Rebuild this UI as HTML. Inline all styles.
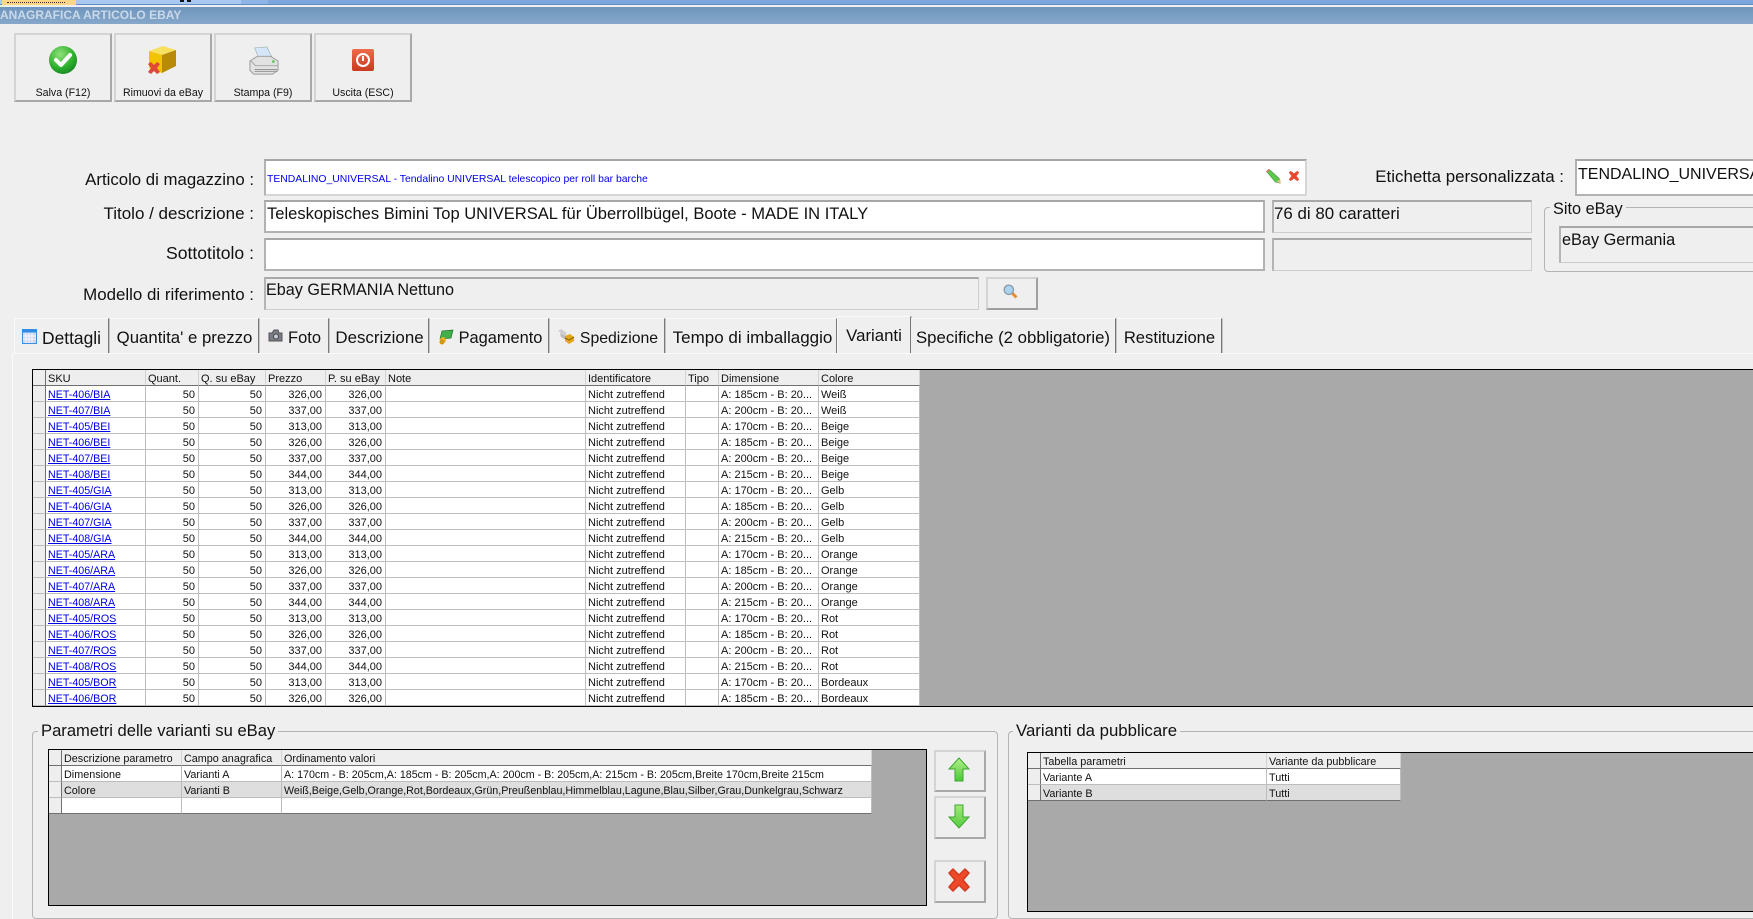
<!DOCTYPE html>
<html><head><meta charset="utf-8"><title>Anagrafica articolo eBay</title>
<style>
html,body{margin:0;padding:0;width:1753px;height:919px;overflow:hidden;background:#efefef;font-family:"Liberation Sans",sans-serif;color:#111}
.a{position:absolute;white-space:nowrap}
.btn{position:absolute;box-sizing:border-box;background:#efefef;border:2px solid;border-color:#d4d4d4 #a8a8a8 #a8a8a8 #d4d4d4}
.btn span{position:absolute;left:0;right:0;top:51px;text-align:center;font-size:10.6px;line-height:14px;color:#111}
.inp{position:absolute;box-sizing:border-box;background:#fff;border:2px solid #b2b2b2;border-top-color:#a6a6a6}
.ro{position:absolute;box-sizing:border-box;background:#efefef;border:1px solid #cdcdcd;border-top:2px solid #a8a8a8;border-left:2px solid #b4b4b4}
.lb{position:absolute;right:1499px;line-height:20px;white-space:nowrap;text-align:right}
.tab{position:absolute;top:318px;height:35px;box-sizing:border-box;border-right:1px solid #777;box-shadow:1px 0 0 #c4c4c4;border-top:1px solid #fafafa;font-size:16.8px;line-height:38px;text-align:center;white-space:nowrap;background:#efefef}
.grid{position:absolute;box-sizing:border-box;border:1px solid #000;background:#a9a9a9;overflow:hidden}
table{border-collapse:separate;border-spacing:0;table-layout:fixed;font-size:11px;color:#111}
td{box-sizing:border-box;height:16px;padding:3px 2px 0;border-right:1px solid #bdbdbd;border-bottom:1px solid #bdbdbd;background:#fff;white-space:nowrap;overflow:hidden;line-height:12px}
tr.h td{background:#eeeeee;border-bottom:1px solid #707070;border-right:1px solid #d2d2d2;height:16px}
td.i{background:#eeeeee;padding:0;border-right:1px solid #707070}
tr.h td.i{border-right:1px solid #707070}
td.n{text-align:right;padding-right:3px}
td a{color:#0000ee;text-decoration:underline;font-size:10.7px}
tr.g td{background:#dedede}
tr.g td.i{background:#eeeeee}
table.s{font-size:10.8px}
td.l{font-size:10.7px}
.gb{position:absolute;box-sizing:border-box;border:1px solid #b4b4b4;border-radius:4px}
.leg{position:absolute;background:#efefef;line-height:18px;padding:0 3px;white-space:nowrap}
</style></head><body>

<!-- top strip -->
<div class="a" style="left:0;top:0;width:1753px;height:5px;background:#7da6dc;border-bottom:1px solid #5f8cc8;box-sizing:border-box"></div>
<div class="a" style="left:0;top:0;width:241px;height:4px;background:#a9c9f2"></div>
<div class="a" style="left:241px;top:0;width:27px;height:4px;background:#8fb4e6"></div>
<div class="a" style="left:2px;top:0;width:74px;height:5px;background:#fbd58a"></div>
<div class="a" style="left:7px;top:0;width:58px;height:2px;border-bottom:1px dotted #333"></div>
<div class="a" style="left:180px;top:0;width:4px;height:2px;background:#111"></div>
<div class="a" style="left:187px;top:0;width:4px;height:2px;background:#111"></div>

<!-- title bar -->
<div class="a" style="left:0;top:7px;width:1753px;height:17px;background:linear-gradient(#6f95bd,#86a7ca)"></div>
<div class="a" style="left:0;top:7px;font-size:12px;font-weight:bold;line-height:17px;color:#c9d9e9">ANAGRAFICA ARTICOLO EBAY</div>

<!-- toolbar -->
<div class="btn" style="left:14px;top:33px;width:98px;height:69px"><span>Salva (F12)</span>
<svg class="a" style="left:32px;top:10px" width="30" height="30" viewBox="0 0 30 30"><defs><radialGradient id="g1" cx=".4" cy=".3" r=".8"><stop offset="0" stop-color="#8fe27a"/><stop offset=".6" stop-color="#2eb02e"/><stop offset="1" stop-color="#0f7d20"/></radialGradient></defs><circle cx="15" cy="15" r="14" fill="url(#g1)"/><path d="M8 15l5 5 9-10" fill="none" stroke="#fff" stroke-width="4" stroke-linecap="round" stroke-linejoin="round"/></svg></div>
<div class="btn" style="left:114px;top:33px;width:98px;height:69px"><span>Rimuovi da eBay</span>
<svg class="a" style="left:30px;top:10px" width="32" height="32" viewBox="0 0 32 32"><path d="M3 6l14-5 13 4-14 5z" fill="#f7e060"/><path d="M3 6l13 4v18L3 23z" fill="#f2c400"/><path d="M16 10l14-5v16l-14 7z" fill="#b88a08"/><path d="M2 19l3-2 3 3 3-3 3 2-3 4 3 4-3 2-3-3-3 3-3-2 3-4z" fill="#e0483a"/></svg></div>
<div class="btn" style="left:214px;top:33px;width:98px;height:69px"><span>Stampa (F9)</span>
<svg class="a" style="left:33px;top:11px" width="30" height="30" viewBox="0 0 32 32"><path d="M6 2l13-1 5 10-14 1z" fill="#d4e6f7" stroke="#9aa" stroke-width=".6"/><path d="M1 16l8-5h14l8 5v10l-6 4H5l-4-4z" fill="#e2e2e2" stroke="#9a9a9a"/><path d="M2 16l5 5h24" fill="none" stroke="#a4a4a4"/><path d="M6 25h24M6 27h24" stroke="#8a8a8a"/><circle cx="26" cy="16.500" r="1.500" fill="#5fc85f"/></svg></div>
<div class="btn" style="left:314px;top:33px;width:98px;height:69px"><span>Uscita (ESC)</span>
<svg class="a" style="left:35px;top:13px" width="24" height="24" viewBox="0 0 24 24"><defs><linearGradient id="g2" x1="0" y1="0" x2="0" y2="1"><stop offset="0" stop-color="#ee6a4a"/><stop offset="1" stop-color="#c93a1e"/></linearGradient></defs><rect x="1" y="1" width="22" height="22" rx="2" fill="url(#g2)"/><circle cx="12" cy="12" r="6" fill="none" stroke="#fff" stroke-width="2"/><path d="M12 8v5" stroke="#fff" stroke-width="2"/></svg></div>

<!-- labels -->
<div class="lb" style="top:170px;font-size:16.8px">Articolo di magazzino :</div>
<div class="lb" style="top:204px;font-size:17px">Titolo / descrizione :</div>
<div class="lb" style="top:243px;font-size:17.6px">Sottotitolo :</div>
<div class="lb" style="top:285px;font-size:16.9px">Modello di riferimento :</div>

<!-- fields -->
<div class="inp" style="left:264px;top:159px;width:1043px;height:37px;border-color:#d6d6d6;border-top-color:#a6a6a6;border-left-color:#b2b2b2"></div>
<div class="a" style="left:267px;top:172px;font-size:10.4px;line-height:16px;color:#0000ee">TENDALINO_UNIVERSAL - Tendalino UNIVERSAL telescopico per roll bar barche</div>
<svg class="a" style="left:1265px;top:168px" width="17" height="17" viewBox="0 0 18 18"><path d="M2 4l3-2 10 9 1 5-5-1z" fill="#5dc84a" stroke="#3b8f2e" stroke-width=".6"/><path d="M1.500 4l3-2.500" stroke="#e86a6a" stroke-width="1.500"/><path d="M12 15l4-3 1 4z" fill="#e8c088"/></svg>
<svg class="a" style="left:1288px;top:170px" width="12" height="12" viewBox="0 0 14 14"><path d="M1 3l2-2 4 3 4-3 2 2-3 4 3 4-2 2-4-3-4 3-2-2 3-4z" fill="#e64a2e"/></svg>

<div class="inp" style="left:264px;top:200px;width:1001px;height:33px"></div>
<div class="a" style="left:267px;top:204px;font-size:16.55px;line-height:20px">Teleskopisches Bimini Top UNIVERSAL für Überrollbügel, Boote - MADE IN ITALY</div>
<div class="inp" style="left:264px;top:238px;width:1001px;height:33px"></div>
<div class="ro" style="left:264px;top:277px;width:715px;height:33px"></div>
<div class="a" style="left:266px;top:280px;font-size:16.2px;line-height:20px">Ebay GERMANIA Nettuno</div>
<div class="btn" style="left:986px;top:277px;width:52px;height:33px;border-color:#d4d4d4 #a0a0a0 #a0a0a0 #d4d4d4">
<svg class="a" style="left:14px;top:4px" width="17" height="17" viewBox="0 0 20 20"><path d="M11 11l6 6" stroke="#e88a30" stroke-width="3.500"/><circle cx="8" cy="8" r="5.500" fill="#a8d4ee" stroke="#8a9aa8" stroke-width="1.500"/></svg></div>

<div class="ro" style="left:1272px;top:200px;width:260px;height:33px"></div>
<div class="a" style="left:1274px;top:204px;font-size:16.9px;line-height:20px">76 di 80 caratteri</div>
<div class="ro" style="left:1272px;top:238px;width:260px;height:33px"></div>

<div class="lb" style="top:167px;right:189px;font-size:16.9px">Etichetta personalizzata :</div>
<div class="inp" style="left:1575px;top:159px;width:200px;height:37px"></div>
<div class="a" style="left:1578px;top:165px;font-size:16px;line-height:20px;width:175px;overflow:hidden">TENDALINO_UNIVERSAL</div>

<div class="gb" style="left:1544px;top:207px;width:230px;height:65px"></div>
<div class="leg" style="left:1550px;top:200px;font-size:16.3px">Sito eBay</div>
<div class="ro" style="left:1559px;top:226px;width:220px;height:37px"></div>
<div class="a" style="left:1562px;top:230px;font-size:16.3px;line-height:20px">eBay Germania</div>

<!-- tab panel -->
<div class="a" style="left:12px;top:353px;width:1741px;height:566px;box-sizing:border-box;border-left:1px solid #fafafa;border-top:1px solid #fafafa"></div>

<div class="tab" style="left:14px;width:95px;padding-left:20px;border-left:1px solid #fafafa;font-size:17.4px">Dettagli</div>
<svg class="a" style="left:22px;top:329px" width="15" height="15" viewBox="0 0 15 15"><rect x=".5" y=".5" width="14" height="14" fill="#cfd8f0" stroke="#3d8fe0"/><rect x=".5" y=".5" width="14" height="3" fill="#2f8be6"/><path d="M4 4v10M7 4v10M10 4v10M1 7h13M1 10h13" stroke="#fff" stroke-width=".7"/></svg>
<div class="tab" style="left:110px;width:149px;padding-left:1px;box-sizing:border-box">Quantita' e prezzo</div>
<div class="tab" style="left:260px;width:69px;padding-left:21px;font-size:16.5px">Foto</div>
<svg class="a" style="left:268px;top:329px" width="15" height="14" viewBox="0 0 15 14"><path d="M1 4h3l2-3h4l1 3h3v8H1z" fill="#777c86" stroke="#555"/><circle cx="8" cy="7.500" r="2.500" fill="#c8ccd4" stroke="#444"/></svg>
<div class="tab" style="left:330px;width:99px;font-size:16.9px;padding-left:1px">Descrizione</div>
<div class="tab" style="left:430px;width:119px;padding-left:23px;font-size:16.4px">Pagamento</div>
<svg class="a" style="left:438px;top:329px" width="16" height="16" viewBox="0 0 16 16"><path d="M4 2l11-1-2 8-11 1z" fill="#3fb04a" stroke="#24702e" stroke-width=".7"/><circle cx="5" cy="11" r="3" fill="#e8b028"/><circle cx="4" cy="13" r="2.500" fill="#d09818"/></svg>
<div class="tab" style="left:550px;width:115px;padding-left:24px;font-size:15.8px;line-height:39px">Spedizione</div>
<svg class="a" style="left:558px;top:329px" width="16" height="15" viewBox="0 0 16 15"><path d="M0 2l3-2 6 4-2 3z" fill="#cfcfcf"/><path d="M2 4l6 3 0 4-5-3z" fill="#bbb"/><path d="M7 7l5-2 4 3v4l-5 3-4-3z" fill="#e2a818"/><path d="M7 9l4 2 5-3" stroke="#8a6408" fill="none"/></svg>
<div class="tab" style="left:666px;width:171px;font-size:17px;padding-left:3px">Tempo di imballaggio</div>
<div class="tab" style="left:837px;top:316px;width:74px;height:37px;line-height:38px;border-top:1px solid #fafafa;border-left:1px solid #fafafa;font-size:16.8px">Varianti</div>
<div class="tab" style="left:911px;width:205px">Specifiche (2 obbligatorie)</div>
<div class="tab" style="left:1117px;width:105px;font-size:16.6px;padding-left:1px">Restituzione</div>

<!-- main grid -->
<div class="grid" style="left:32px;top:369px;width:1740px;height:338px">
<table style="width:887px">
<colgroup><col style="width:13px"><col style="width:100px"><col style="width:53px"><col style="width:67px"><col style="width:60px"><col style="width:60px"><col style="width:200px"><col style="width:100px"><col style="width:33px"><col style="width:100px"><col style="width:101px"></colgroup>
<tr class="h"><td class="i"></td><td>SKU</td><td>Quant.</td><td>Q. su eBay</td><td>Prezzo</td><td>P. su eBay</td><td>Note</td><td>Identificatore</td><td>Tipo</td><td>Dimensione</td><td>Colore</td></tr>
<tr><td class="i"></td><td><a>NET-406/BIA</a></td><td class="n">50</td><td class="n">50</td><td class="n">326,00</td><td class="n">326,00</td><td></td><td>Nicht zutreffend</td><td></td><td>A: 185cm - B: 20...</td><td>Weiß</td></tr>
<tr><td class="i"></td><td><a>NET-407/BIA</a></td><td class="n">50</td><td class="n">50</td><td class="n">337,00</td><td class="n">337,00</td><td></td><td>Nicht zutreffend</td><td></td><td>A: 200cm - B: 20...</td><td>Weiß</td></tr>
<tr><td class="i"></td><td><a>NET-405/BEI</a></td><td class="n">50</td><td class="n">50</td><td class="n">313,00</td><td class="n">313,00</td><td></td><td>Nicht zutreffend</td><td></td><td>A: 170cm - B: 20...</td><td>Beige</td></tr>
<tr><td class="i"></td><td><a>NET-406/BEI</a></td><td class="n">50</td><td class="n">50</td><td class="n">326,00</td><td class="n">326,00</td><td></td><td>Nicht zutreffend</td><td></td><td>A: 185cm - B: 20...</td><td>Beige</td></tr>
<tr><td class="i"></td><td><a>NET-407/BEI</a></td><td class="n">50</td><td class="n">50</td><td class="n">337,00</td><td class="n">337,00</td><td></td><td>Nicht zutreffend</td><td></td><td>A: 200cm - B: 20...</td><td>Beige</td></tr>
<tr><td class="i"></td><td><a>NET-408/BEI</a></td><td class="n">50</td><td class="n">50</td><td class="n">344,00</td><td class="n">344,00</td><td></td><td>Nicht zutreffend</td><td></td><td>A: 215cm - B: 20...</td><td>Beige</td></tr>
<tr><td class="i"></td><td><a>NET-405/GIA</a></td><td class="n">50</td><td class="n">50</td><td class="n">313,00</td><td class="n">313,00</td><td></td><td>Nicht zutreffend</td><td></td><td>A: 170cm - B: 20...</td><td>Gelb</td></tr>
<tr><td class="i"></td><td><a>NET-406/GIA</a></td><td class="n">50</td><td class="n">50</td><td class="n">326,00</td><td class="n">326,00</td><td></td><td>Nicht zutreffend</td><td></td><td>A: 185cm - B: 20...</td><td>Gelb</td></tr>
<tr><td class="i"></td><td><a>NET-407/GIA</a></td><td class="n">50</td><td class="n">50</td><td class="n">337,00</td><td class="n">337,00</td><td></td><td>Nicht zutreffend</td><td></td><td>A: 200cm - B: 20...</td><td>Gelb</td></tr>
<tr><td class="i"></td><td><a>NET-408/GIA</a></td><td class="n">50</td><td class="n">50</td><td class="n">344,00</td><td class="n">344,00</td><td></td><td>Nicht zutreffend</td><td></td><td>A: 215cm - B: 20...</td><td>Gelb</td></tr>
<tr><td class="i"></td><td><a>NET-405/ARA</a></td><td class="n">50</td><td class="n">50</td><td class="n">313,00</td><td class="n">313,00</td><td></td><td>Nicht zutreffend</td><td></td><td>A: 170cm - B: 20...</td><td>Orange</td></tr>
<tr><td class="i"></td><td><a>NET-406/ARA</a></td><td class="n">50</td><td class="n">50</td><td class="n">326,00</td><td class="n">326,00</td><td></td><td>Nicht zutreffend</td><td></td><td>A: 185cm - B: 20...</td><td>Orange</td></tr>
<tr><td class="i"></td><td><a>NET-407/ARA</a></td><td class="n">50</td><td class="n">50</td><td class="n">337,00</td><td class="n">337,00</td><td></td><td>Nicht zutreffend</td><td></td><td>A: 200cm - B: 20...</td><td>Orange</td></tr>
<tr><td class="i"></td><td><a>NET-408/ARA</a></td><td class="n">50</td><td class="n">50</td><td class="n">344,00</td><td class="n">344,00</td><td></td><td>Nicht zutreffend</td><td></td><td>A: 215cm - B: 20...</td><td>Orange</td></tr>
<tr><td class="i"></td><td><a>NET-405/ROS</a></td><td class="n">50</td><td class="n">50</td><td class="n">313,00</td><td class="n">313,00</td><td></td><td>Nicht zutreffend</td><td></td><td>A: 170cm - B: 20...</td><td>Rot</td></tr>
<tr><td class="i"></td><td><a>NET-406/ROS</a></td><td class="n">50</td><td class="n">50</td><td class="n">326,00</td><td class="n">326,00</td><td></td><td>Nicht zutreffend</td><td></td><td>A: 185cm - B: 20...</td><td>Rot</td></tr>
<tr><td class="i"></td><td><a>NET-407/ROS</a></td><td class="n">50</td><td class="n">50</td><td class="n">337,00</td><td class="n">337,00</td><td></td><td>Nicht zutreffend</td><td></td><td>A: 200cm - B: 20...</td><td>Rot</td></tr>
<tr><td class="i"></td><td><a>NET-408/ROS</a></td><td class="n">50</td><td class="n">50</td><td class="n">344,00</td><td class="n">344,00</td><td></td><td>Nicht zutreffend</td><td></td><td>A: 215cm - B: 20...</td><td>Rot</td></tr>
<tr><td class="i"></td><td><a>NET-405/BOR</a></td><td class="n">50</td><td class="n">50</td><td class="n">313,00</td><td class="n">313,00</td><td></td><td>Nicht zutreffend</td><td></td><td>A: 170cm - B: 20...</td><td>Bordeaux</td></tr>
<tr><td class="i"></td><td><a>NET-406/BOR</a></td><td class="n">50</td><td class="n">50</td><td class="n">326,00</td><td class="n">326,00</td><td></td><td>Nicht zutreffend</td><td></td><td>A: 185cm - B: 20...</td><td>Bordeaux</td></tr>
</table>
</div>

<!-- group 1 -->
<div class="gb" style="left:32px;top:731px;width:966px;height:188px"></div>
<div class="leg" style="left:38px;top:722px;font-size:16.6px">Parametri delle varianti su eBay</div>
<div class="grid" style="left:48px;top:749px;width:879px;height:157px">
<table class="s" style="width:823px">
<colgroup><col style="width:13px"><col style="width:120px"><col style="width:100px"><col style="width:590px"></colgroup>
<tr class="h"><td class="i"></td><td>Descrizione parametro</td><td>Campo anagrafica</td><td>Ordinamento valori</td></tr>
<tr><td class="i"></td><td>Dimensione</td><td>Varianti A</td><td class="l">A: 170cm - B: 205cm,A: 185cm - B: 205cm,A: 200cm - B: 205cm,A: 215cm - B: 205cm,Breite 170cm,Breite 215cm</td></tr>
<tr class="g"><td class="i"></td><td>Colore</td><td>Varianti B</td><td class="l">Weiß,Beige,Gelb,Orange,Rot,Bordeaux,Grün,Preußenblau,Himmelblau,Lagune,Blau,Silber,Grau,Dunkelgrau,Schwarz</td></tr>
<tr><td class="i" style="border-bottom-color:#707070"></td><td style="border-bottom-color:#707070"></td><td style="border-bottom-color:#707070"></td><td style="border-bottom-color:#707070"></td></tr>
</table>
</div>

<div class="btn" style="left:934px;top:750px;width:52px;height:42px">
<svg class="a" style="left:11px;top:5px" width="24" height="26" viewBox="0 0 24 26"><defs><linearGradient id="g3" x1="0" y1="0" x2="0" y2="1"><stop offset="0" stop-color="#b4f08a"/><stop offset="1" stop-color="#4cc83a"/></linearGradient></defs><path d="M12 1l10 11h-6v12H8V12H2z" fill="url(#g3)" stroke="#3aa82e"/></svg></div>
<div class="btn" style="left:934px;top:796px;width:52px;height:43px">
<svg class="a" style="left:11px;top:5px" width="24" height="26" viewBox="0 0 24 26"><defs><linearGradient id="g4" x1="0" y1="0" x2="0" y2="1"><stop offset="0" stop-color="#a4e87a"/><stop offset="1" stop-color="#54cc3e"/></linearGradient></defs><path d="M8 2h8v12h6L12 25 2 14h6z" fill="url(#g4)" stroke="#3aa82e"/></svg></div>
<div class="btn" style="left:934px;top:860px;width:52px;height:43px">
<svg class="a" style="left:11px;top:5px" width="24" height="26" viewBox="0 0 24 26"><path d="M2 6l4-4 6 6 6-6 4 4-6 7 6 7-4 4-6-6-6 6-4-4 6-7z" fill="#ee4a2a" stroke="#d03a1e" stroke-linejoin="round" stroke-width="1.500"/></svg></div>

<!-- group 2 -->
<div class="gb" style="left:1008px;top:731px;width:770px;height:188px"></div>
<div class="leg" style="left:1013px;top:722px;font-size:16.8px">Varianti da pubblicare</div>
<div class="grid" style="left:1027px;top:752px;width:760px;height:160px">
<table class="s" style="width:373px">
<colgroup><col style="width:13px"><col style="width:226px"><col style="width:134px"></colgroup>
<tr class="h"><td class="i"></td><td>Tabella parametri</td><td>Variante da pubblicare</td></tr>
<tr><td class="i"></td><td>Variante A</td><td>Tutti</td></tr>
<tr class="g"><td class="i" style="border-bottom-color:#707070"></td><td style="border-bottom-color:#707070">Variante B</td><td style="border-bottom-color:#707070">Tutti</td></tr>
</table>
</div>
</body></html>
